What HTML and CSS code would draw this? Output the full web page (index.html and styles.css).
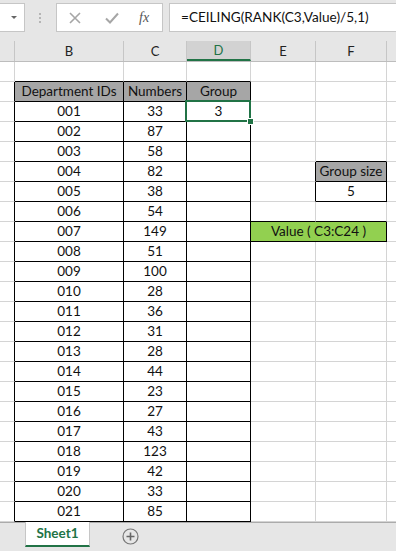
FILE: index.html
```html
<!DOCTYPE html>
<html lang="en">
<head>
    <meta charset="UTF-8">
    <title>Sheet1</title>
    <link rel="stylesheet" href="styles.css">
</head>
<body>
    <div class="topbar">
        <div class="namebox"><span class="arrow"></span></div>
        <div class="dots"><i></i><i></i><i></i></div>
        <div class="fxbox">
            <svg class="ico" width="14" height="14" viewBox="0 0 14 14"><path d="M2 2L12 12M12 2L2 12" stroke="#a6a6a6" stroke-width="1.6" fill="none"/></svg>
            <svg class="ico" width="16" height="14" viewBox="0 0 16 14"><path d="M2 7.5L6 11.5L14 2.5" stroke="#a6a6a6" stroke-width="2" fill="none"/></svg>
            <span class="fx">fx</span>
        </div>
        <div class="formula">=CEILING(RANK(C3,Value)/5,1)</div>
    </div>

    <div class="colheads">
        <div class="ch rh"></div>
        <div class="ch cb">B</div>
        <div class="ch cc">C</div>
        <div class="ch cd active">D</div>
        <div class="ch ce">E</div>
        <div class="ch cf">F</div>
        <div class="ch cg"></div>
    </div>

    <div class="sheet">
        <div class="r"><div class="c rh"></div><div class="c cb tt"></div><div class="c cc tt"></div><div class="c cd tt"></div><div class="c ce"></div><div class="c cf"></div><div class="c cg"></div></div>
        <div class="r"><div class="c rh edge"></div><div class="c cb t hd">Department IDs</div><div class="c cc t hd">Numbers</div><div class="c cd t hd">Group</div><div class="c ce"></div><div class="c cf"></div><div class="c cg"></div></div>
        <div class="r"><div class="c rh edge"></div><div class="c cb t">001</div><div class="c cc t">33</div><div class="c cd t sel">3</div><div class="c ce"></div><div class="c cf"></div><div class="c cg"></div></div>
        <div class="r"><div class="c rh edge"></div><div class="c cb t">002</div><div class="c cc t">87</div><div class="c cd t"></div><div class="c ce"></div><div class="c cf"></div><div class="c cg"></div></div>
        <div class="r"><div class="c rh edge"></div><div class="c cb t">003</div><div class="c cc t">58</div><div class="c cd t"></div><div class="c ce"></div><div class="c cf tt"></div><div class="c cg"></div></div>
        <div class="r"><div class="c rh edge"></div><div class="c cb t">004</div><div class="c cc t">82</div><div class="c cd t"></div><div class="c ce edge"></div><div class="c cf t hd">Group size</div><div class="c cg"></div></div>
        <div class="r"><div class="c rh edge"></div><div class="c cb t">005</div><div class="c cc t">38</div><div class="c cd t"></div><div class="c ce edge"></div><div class="c cf t">5</div><div class="c cg"></div></div>
        <div class="r"><div class="c rh edge"></div><div class="c cb t">006</div><div class="c cc t">54</div><div class="c cd t"></div><div class="c ce tt"></div><div class="c cf tt"></div><div class="c cg"></div></div>
        <div class="r"><div class="c rh edge"></div><div class="c cb t">007</div><div class="c cc t">149</div><div class="c cd t"></div><div class="c cv t">Value ( C3:C24 )</div><div class="c cg"></div></div>
        <div class="r"><div class="c rh edge"></div><div class="c cb t">008</div><div class="c cc t">51</div><div class="c cd t"></div><div class="c ce"></div><div class="c cf"></div><div class="c cg"></div></div>
        <div class="r"><div class="c rh edge"></div><div class="c cb t">009</div><div class="c cc t">100</div><div class="c cd t"></div><div class="c ce"></div><div class="c cf"></div><div class="c cg"></div></div>
        <div class="r"><div class="c rh edge"></div><div class="c cb t">010</div><div class="c cc t">28</div><div class="c cd t"></div><div class="c ce"></div><div class="c cf"></div><div class="c cg"></div></div>
        <div class="r"><div class="c rh edge"></div><div class="c cb t">011</div><div class="c cc t">36</div><div class="c cd t"></div><div class="c ce"></div><div class="c cf"></div><div class="c cg"></div></div>
        <div class="r"><div class="c rh edge"></div><div class="c cb t">012</div><div class="c cc t">31</div><div class="c cd t"></div><div class="c ce"></div><div class="c cf"></div><div class="c cg"></div></div>
        <div class="r"><div class="c rh edge"></div><div class="c cb t">013</div><div class="c cc t">28</div><div class="c cd t"></div><div class="c ce"></div><div class="c cf"></div><div class="c cg"></div></div>
        <div class="r"><div class="c rh edge"></div><div class="c cb t">014</div><div class="c cc t">44</div><div class="c cd t"></div><div class="c ce"></div><div class="c cf"></div><div class="c cg"></div></div>
        <div class="r"><div class="c rh edge"></div><div class="c cb t">015</div><div class="c cc t">23</div><div class="c cd t"></div><div class="c ce"></div><div class="c cf"></div><div class="c cg"></div></div>
        <div class="r"><div class="c rh edge"></div><div class="c cb t">016</div><div class="c cc t">27</div><div class="c cd t"></div><div class="c ce"></div><div class="c cf"></div><div class="c cg"></div></div>
        <div class="r"><div class="c rh edge"></div><div class="c cb t">017</div><div class="c cc t">43</div><div class="c cd t"></div><div class="c ce"></div><div class="c cf"></div><div class="c cg"></div></div>
        <div class="r"><div class="c rh edge"></div><div class="c cb t">018</div><div class="c cc t">123</div><div class="c cd t"></div><div class="c ce"></div><div class="c cf"></div><div class="c cg"></div></div>
        <div class="r"><div class="c rh edge"></div><div class="c cb t">019</div><div class="c cc t">42</div><div class="c cd t"></div><div class="c ce"></div><div class="c cf"></div><div class="c cg"></div></div>
        <div class="r"><div class="c rh edge"></div><div class="c cb t">020</div><div class="c cc t">33</div><div class="c cd t"></div><div class="c ce"></div><div class="c cf"></div><div class="c cg"></div></div>
        <div class="r"><div class="c rh edge"></div><div class="c cb t">021</div><div class="c cc t">85</div><div class="c cd t"></div><div class="c ce"></div><div class="c cf"></div><div class="c cg"></div></div>
    </div>

    <div class="tabs">
        <div class="tab">Sheet1</div>
        <svg class="add" width="17" height="17" viewBox="0 0 17 17"><circle cx="8.5" cy="8.5" r="7.5" stroke="#777" stroke-width="1.2" fill="none"/><path d="M8.5 4.5V12.5M4.5 8.5H12.5" stroke="#666" stroke-width="1.6"/></svg>
    </div>
</body>
</html>
```

FILE: styles.css
```css
body {
    margin: 0;
    width: 396px;
    height: 551px;
    overflow: hidden;
    background: #fff;
    font-family: 'Lato', 'Liberation Sans', sans-serif;
    color: #111;
}
.topbar {
    height: 41px;
    box-sizing: border-box;
    padding-top: 3px;
    background: #e6e6e6;
    display: flex;
    align-items: flex-start;
}
.namebox {
    width: 25px;
    height: 29px;
    box-sizing: border-box;
    background: #fff;
    border: 1px solid #c6c6c6;
    border-left: none;
    display: flex;
    align-items: center;
    justify-content: flex-end;
    padding-right: 7px;
}
.arrow {
    width: 0;
    height: 0;
    border-left: 3px solid transparent;
    border-right: 3px solid transparent;
    border-top: 3px solid #666;
}
.dots {
    width: 3px;
    margin: 10px 14px 0 14px;
    display: flex;
    flex-direction: column;
    gap: 2px;
}
.dots i {
    display: block;
    width: 2px;
    height: 2px;
    background: #b5b5b5;
}
.fxbox {
    width: 107px;
    height: 29px;
    box-sizing: border-box;
    background: #fff;
    border: 1px solid #c6c6c6;
    display: flex;
    align-items: center;
    padding-left: 11px;
}
.fxbox .ico:first-child {
    margin-right: 22px;
}
.fx {
    margin-left: 19px;
    font-family: 'Liberation Serif', serif;
    font-style: italic;
    font-size: 14px;
    color: #555;
}
.formula {
    flex: 1;
    margin-left: 6px;
    margin-right: -2px;
    height: 29px;
    box-sizing: border-box;
    background: #fff;
    border: 1px solid #c6c6c6;
    padding-left: 11px;
    line-height: 27px;
    font-size: 13.6px;
    color: #111;
}
.colheads {
    display: flex;
    height: 21px;
    background: #e6e6e6;
    border-bottom: 1px solid #bdbdbd;
    box-sizing: border-box;
}
.ch {
    box-sizing: border-box;
    border-right: 1px solid #c6c6c6;
    text-align: center;
    font-size: 13px;
    line-height: 20px;
    color: #222;
}
.ch.active {
    background: #d2d2d2;
    color: #217346;
    border-bottom: 2px solid #217346;
    line-height: 18px;
}
.sheet {
    height: 460px;
}
.r {
    display: flex;
    height: 20px;
}
.c {
    box-sizing: border-box;
    height: 20px;
    border-right: 1px solid #d4d4d4;
    border-bottom: 1px solid #d4d4d4;
    text-align: center;
    font-size: 13.5px;
    line-height: 19px;
    white-space: nowrap;
    overflow: visible;
}
.rh { width: 15px; }
.cb { width: 109px; }
.cc { width: 63px; }
.cd { width: 64px; }
.ce { width: 65px; }
.cf { width: 71px; }
.cv { width: 136px; background: #92d050; }
.cg { flex: 1; border-right: none; }
.c.t {
    border-right-color: #000;
    border-bottom-color: #000;
}
.c.tt {
    border-bottom-color: #000;
}
.c.edge {
    border-right-color: #000;
}
.c.hd {
    background: #a6a6a6;
}
.sel {
    position: relative;
}
.sel::before {
    content: "";
    position: absolute;
    top: -2px;
    left: -2px;
    right: -1px;
    bottom: -1px;
    border: 2px solid #217346;
}
.sel::after {
    content: "";
    position: absolute;
    right: -3px;
    bottom: -3px;
    width: 5px;
    height: 5px;
    background: #217346;
    box-shadow: 0 0 0 1px #fff;
}
.tabs {
    height: 30px;
    box-sizing: border-box;
    background: #e6e6e6;
    border-top: 1px solid #ababab;
    border-bottom: 1px solid #d0d0d0;
    display: flex;
    align-items: flex-start;
}
.tab {
    margin-left: 25px;
    margin-top: -1px;
    width: 65px;
    height: 25px;
    box-sizing: border-box;
    background: #fff;
    border-left: 1px solid #c6c6c6;
    border-right: 1px solid #c6c6c6;
    border-bottom: 2px solid #217346;
    text-align: center;
    line-height: 23px;
    font-weight: bold;
    font-size: 13.5px;
    color: #217346;
}
.add {
    margin-left: 32px;
    margin-top: 5px;
}
```
